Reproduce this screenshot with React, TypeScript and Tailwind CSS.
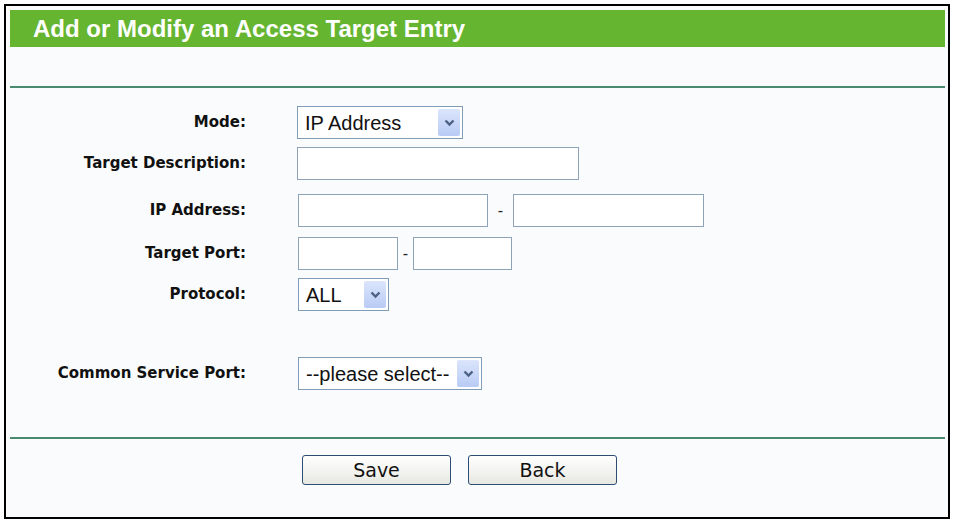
import React from 'react';

const font = { fontFamily: '"Liberation Sans", Arial, sans-serif' };
const tahoma = { fontFamily: '"DejaVu Sans", Tahoma, sans-serif' };

function Arrow() {
  return (
    <span className="flex h-full w-[22px] items-center justify-center rounded-[2px] bg-gradient-to-b from-[#dbe5fb] to-[#b9cbf5]">
      <svg width="11" height="8" viewBox="0 0 11 8">
        <path d="M1.5 1.5 L5.5 5.5 L9.5 1.5" fill="none" stroke="#4d6185" strokeWidth="2.4" />
      </svg>
    </span>
  );
}

function Select({ value, width }: { value: string; width: string }) {
  return (
    <div className={`flex h-[33px] items-center border border-[#7f9db9] bg-white p-[2px] ${width}`}>
      <span className="flex-1 whitespace-nowrap pl-[5px] text-[20px] leading-none text-[#111]">{value}</span>
      <Arrow />
    </div>
  );
}

function Field({ width }: { width: string }) {
  return <div className={`h-[33px] border border-[#8fa3b8] bg-white ${width}`} />;
}

function Row({ label, mt, children }: { label: string; mt: string; children: React.ReactNode }) {
  return (
    <div className={`flex h-[33px] items-center ${mt}`}>
      <div className="w-[236px] whitespace-nowrap text-right text-[15px] font-bold text-[#111]" style={tahoma}>
        {label}
      </div>
      <div className="ml-[51px] flex items-center">{children}</div>
    </div>
  );
}

function Dash({ w }: { w: string }) {
  return <span className={`text-center text-[16px] text-[#222] ${w}`}>-</span>;
}

export default function App() {
  return (
    <div className="h-[521px] w-[953px] bg-white pl-[4px] pt-[4px]" style={font}>
      <div className="h-[515px] w-[946px] border-2 border-black bg-[#fafbfc] pl-[4px] pr-[3px] pt-[4px]">
        <div className="flex h-[37px] items-center bg-[#66b530] pl-[23px] text-[24px] font-bold text-white">
          Add or Modify an Access Target Entry
        </div>
        <div className="mt-[39px] h-[2px] bg-[#4a8a6e]" />

        <Row label="Mode:" mt="mt-[18px]">
          <Select value="IP Address" width="w-[166px]" />
        </Row>
        <Row label="Target Description:" mt="mt-[8px]">
          <Field width="w-[282px]" />
        </Row>
        <Row label="IP Address:" mt="mt-[14px]">
          <div className="ml-[1px] flex items-center">
            <Field width="w-[190px]" />
            <Dash w="w-[25px]" />
            <Field width="w-[191px]" />
          </div>
        </Row>
        <Row label="Target Port:" mt="mt-[10px]">
          <div className="ml-[1px] flex items-center">
            <Field width="w-[100px]" />
            <Dash w="w-[15px]" />
            <Field width="w-[99px]" />
          </div>
        </Row>
        <Row label="Protocol:" mt="mt-[8px]">
          <div className="ml-[1px]">
            <Select value="ALL" width="w-[91px]" />
          </div>
        </Row>
        <Row label="Common Service Port:" mt="mt-[46px]">
          <div className="ml-[1px]">
            <Select value="--please select--" width="w-[184px]" />
          </div>
        </Row>

        <div className="mt-[47px] h-[2px] bg-[#4a8a6e]" />
        <div className="mt-[16px] flex gap-[17px] pl-[292px]" style={tahoma}>
          <button className="h-[30px] w-[149px] rounded-[3px] border border-[#2d4d75] bg-gradient-to-b from-white to-[#e8e8e2] text-[19px] leading-none text-[#111]">
            Save
          </button>
          <button className="h-[30px] w-[149px] rounded-[3px] border border-[#2d4d75] bg-gradient-to-b from-white to-[#e8e8e2] text-[19px] leading-none text-[#111]">
            Back
          </button>
        </div>
      </div>
    </div>
  );
}
